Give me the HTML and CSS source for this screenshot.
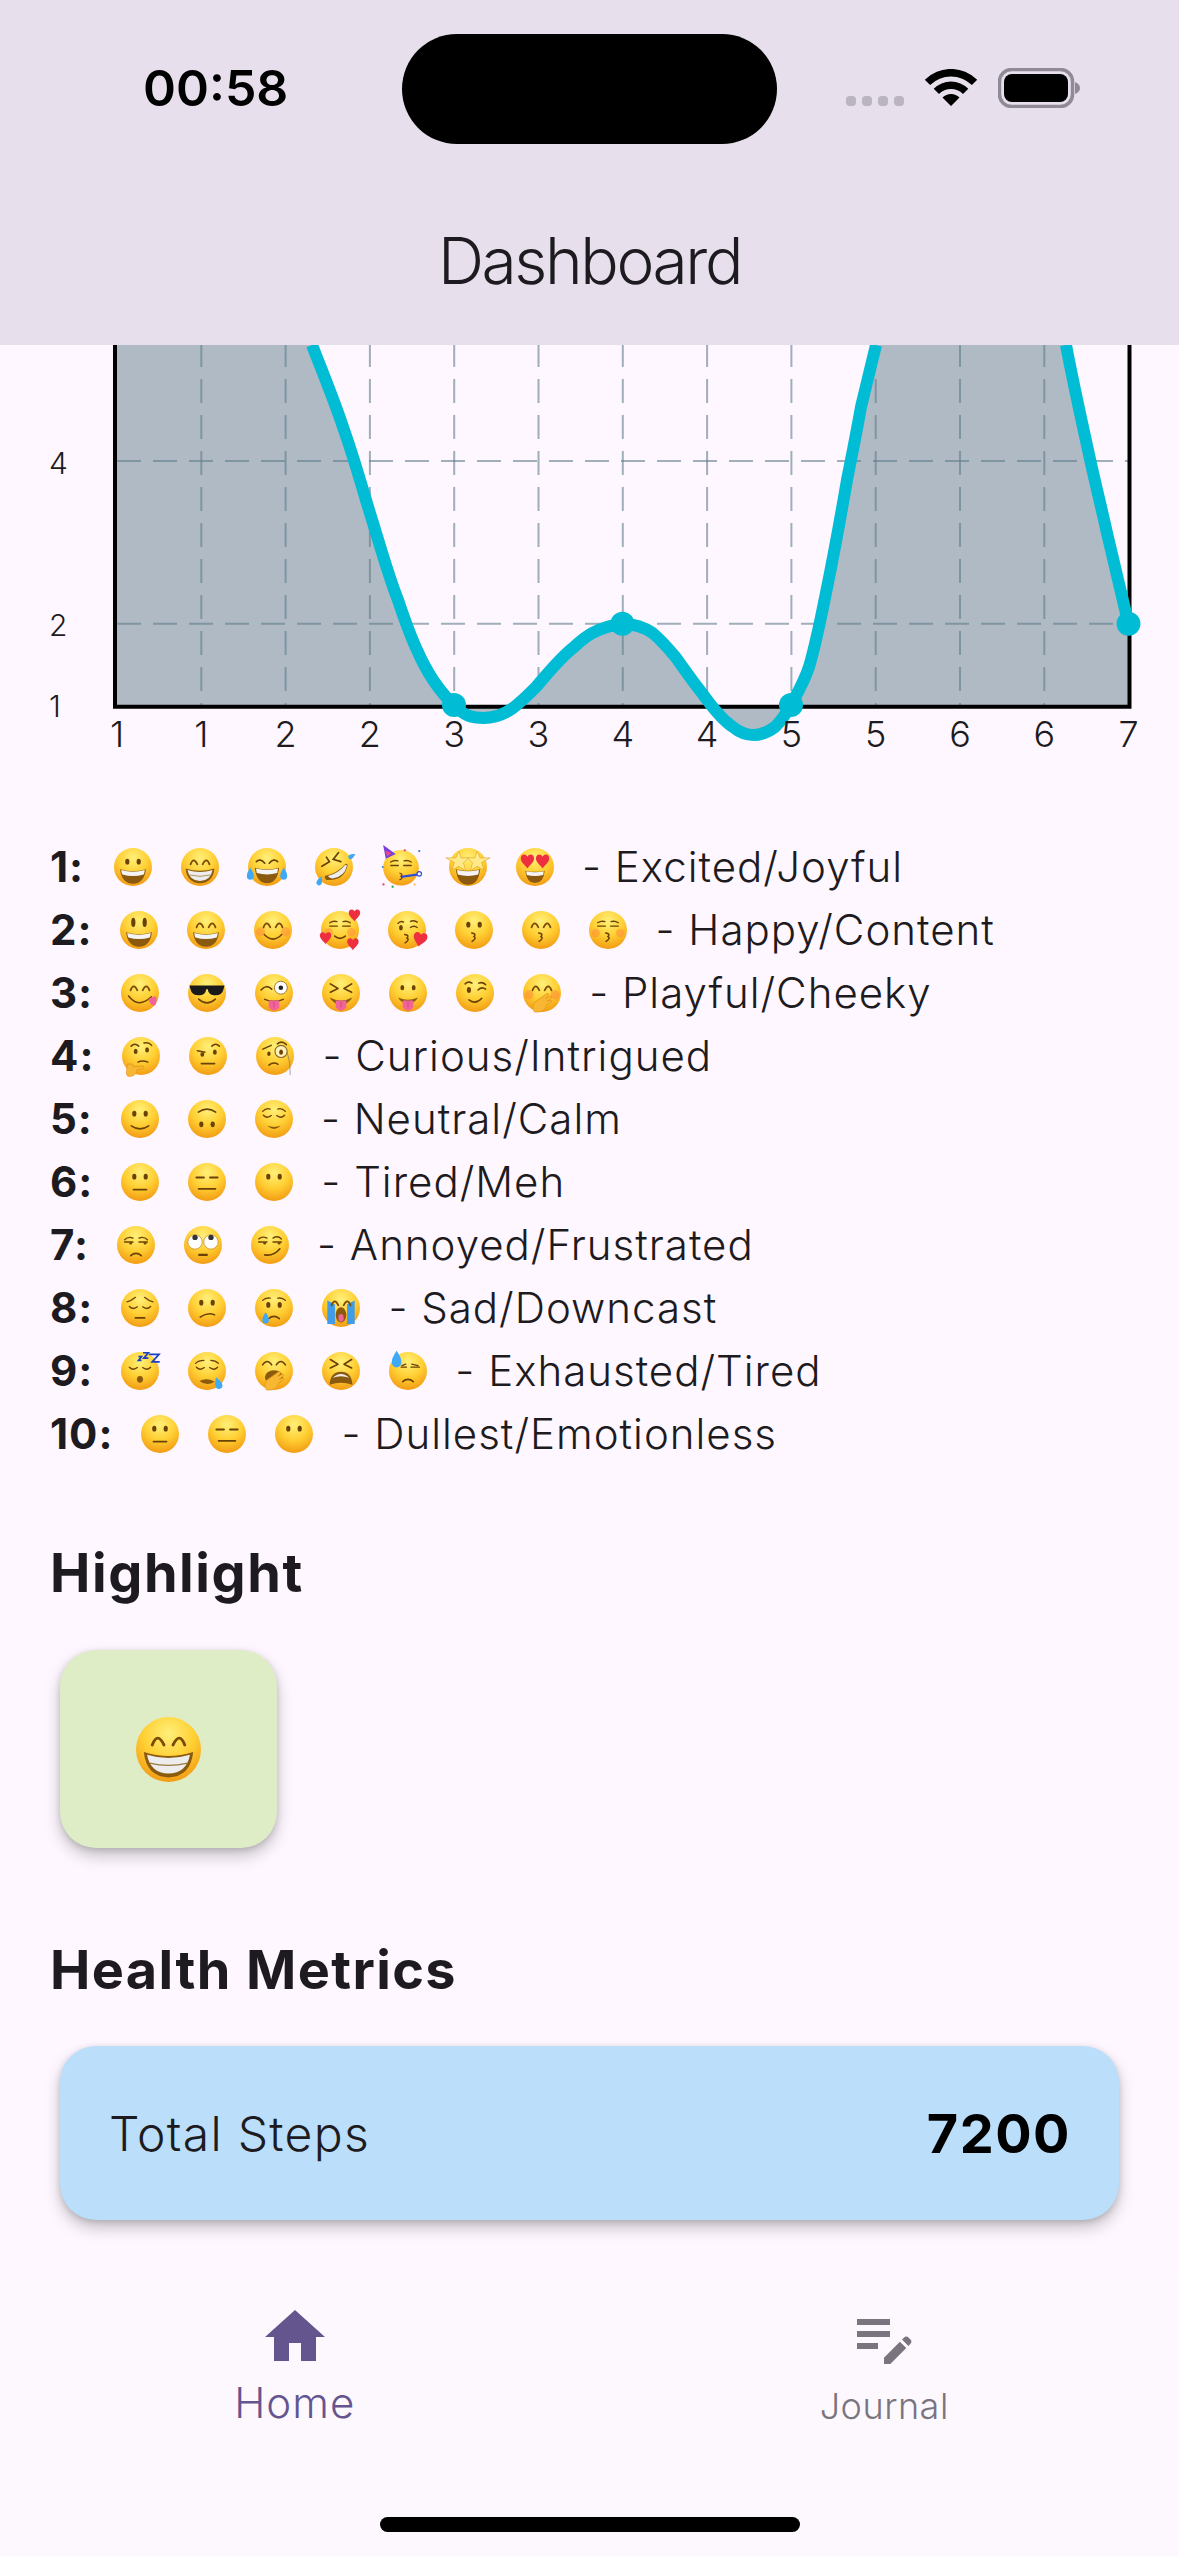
FILE: index.html
```html
<!DOCTYPE html>
<html lang="en">
<head>
<meta charset="utf-8">
<title>Dashboard</title>
<link rel="stylesheet" href="styles.css">
</head>
<body>
<svg class="defs" width="0" height="0" aria-hidden="true">
  <defs>
    <radialGradient id="fg" cx=".5" cy=".26" r=".8">
      <stop offset="0" stop-color="#FFF07A"/><stop offset=".5" stop-color="#FFCF33"/><stop offset="1" stop-color="#F0930E"/>
    </radialGradient>
    <g id="face"><circle cx="50" cy="50" r="50" fill="url(#fg)"/></g>
    <g id="eo" fill="#6B4206"><ellipse cx="35" cy="36" rx="5.5" ry="7.5"/><ellipse cx="65" cy="36" rx="5.5" ry="7.5"/></g>
    <g id="ea" fill="none" stroke="#7A4A06" stroke-width="4.5" stroke-linecap="round"><path d="M25 43Q33 22 43 43"/><path d="M57 43Q67 22 75 43"/></g>
    <g id="ec" fill="none" stroke="#6B4206" stroke-width="3.5" stroke-linecap="round"><path d="M22 40Q32 50 43 41"/><path d="M57 41Q68 50 78 40"/></g>
    <g id="ef" fill="none" stroke="#6B4206" stroke-width="3.5" stroke-linecap="round"><path d="M23 40H43"/><path d="M57 40H77"/><path d="M23 31Q32 25 42 28"/><path d="M58 28Q68 25 77 31"/></g>
    <g id="mo"><path d="M16 56Q50 66 84 56Q80 93 50 94Q20 93 16 56z" fill="#8B5A0E"/><path d="M19 58Q50 67 81 58Q80 66 78 70Q50 78 22 70Q20 66 19 58z" fill="#F4F4F4"/></g>
    <g id="mb"><path d="M12 54Q50 66 88 54Q84 92 50 93Q16 92 12 54z" fill="#8B5A0E"/><path d="M17 58Q50 68 83 58Q78 86 50 87Q22 86 17 58z" fill="#EDEDED"/><path d="M21 71Q50 78 79 71" stroke="#9C7A3C" stroke-width="2" fill="none"/></g>
    <g id="mj"><path d="M18 52Q50 60 82 52Q78 92 50 93Q22 92 18 52z" fill="#8B5A0E"/><path d="M21 54Q50 61 79 54L77 66Q50 73 23 66z" fill="#F4F4F4"/></g>
    <path id="ms" d="M30 67Q50 84 70 67" fill="none" stroke="#6B4206" stroke-width="4" stroke-linecap="round"/>
    <path id="mf" d="M33 70H67" fill="none" stroke="#6B4206" stroke-width="5" stroke-linecap="round"/>
    <path id="ms2" d="M36 78Q50 66 64 78" fill="none" stroke="#6B4206" stroke-width="4" stroke-linecap="round"/>
    <path id="mk" d="M44 58Q57 60 50 67Q58 71 45 80" fill="none" stroke="#6B4206" stroke-width="4" stroke-linecap="round"/>
    <path id="ht" d="M0 -9C-4 -16 -13 -13 -12 -5C-11 2 -4 6 0 12C4 6 11 2 12 -5C13 -13 4 -16 0 -9z" fill="#EE2F3F"/>
    <g id="tg"><path d="M36 70H64V88Q50 104 36 88z" fill="#F0649A"/><path d="M50 72V88" stroke="#C83E75" stroke-width="2"/></g>
    <path id="drop" d="M0 -20Q11 -4 10 5A10 10 0 0 1 -10 5Q-11 -4 0 -20z" fill="#3FA9F5"/>
    <path id="hand" d="M30 100Q20 80 34 72L62 52Q68 50 68 56L60 64L72 58Q78 58 74 64L64 72L74 68Q78 70 74 74L62 82Q58 98 42 100z" fill="#F7B733" stroke="#D98A12" stroke-width="1.5"/>

    <symbol id="e-grin" viewBox="0 0 100 100"><use href="#face"/><use href="#eo"/><use href="#mo"/></symbol>
    <symbol id="e-beam" viewBox="0 0 100 100"><use href="#face"/><use href="#ea"/><use href="#mb"/></symbol>
    <symbol id="e-joy" viewBox="0 0 100 100"><use href="#face"/><path d="M22 36Q32 26 44 40M78 36Q68 26 56 40" fill="none" stroke="#6B4206" stroke-width="4.5" stroke-linecap="round"/><use href="#mj"/><use href="#drop" transform="translate(6 70) scale(.9)"/><use href="#drop" transform="translate(94 70) scale(.9)"/></symbol>
    <symbol id="e-rofl" viewBox="0 0 100 100"><use href="#face"/><path d="M18 48L38 36L30 24M62 12L48 30L68 36" fill="none" stroke="#6B4206" stroke-width="4.5" stroke-linecap="round"/><path d="M30 84Q78 88 86 44Q84 40 80 42Q60 66 26 74Q24 80 30 84z" fill="#8B5A0E"/><path d="M84 46Q80 42 78 46Q62 66 34 74Q38 80 46 80Q78 76 84 46z" fill="#EDEDED"/><use href="#drop" transform="translate(96 22) rotate(60) scale(.6)"/><use href="#drop" transform="translate(12 88) rotate(20) scale(.7)"/></symbol>
    <symbol id="e-party" viewBox="0 0 100 100"><circle cx="50" cy="52" r="47" fill="url(#fg)"/><path d="M3 -8L36 16L10 28z" fill="#7A3FD6"/><path d="M8 6L24 14L14 22z" fill="#F2468E"/><use href="#ef" transform="translate(0 6)"/><path d="M46 66Q56 68 50 75Q58 78 46 84" fill="none" stroke="#6B4206" stroke-width="3.500"/><path d="M50 76L92 70" stroke="#2F4FD8" stroke-width="6"/><circle cx="98" cy="68" r="6" fill="none" stroke="#2F4FD8" stroke-width="3"/><circle cx="98" cy="8" r="3" fill="#2F7FE0"/><circle cx="60" cy="6" r="3" fill="#E83E6D"/><circle cx="4" cy="96" r="3" fill="#E83E6D"/><circle cx="28" cy="102" r="3" fill="#2FA84F"/><circle cx="86" cy="96" r="2.500" fill="#F5B32E"/><circle cx="2" cy="50" r="2.500" fill="#2F7FE0"/></symbol>
    <symbol id="e-star" viewBox="0 0 100 100"><use href="#face"/><use href="#mj" transform="translate(0 4)"/><g fill="#FFE98A" stroke="#D9A020" stroke-width="1.500"><path d="M26 8L32 26L52 26L38 39L44 60L26 48L8 58L14 38L-8 26L18 26z"/><path d="M74 8L82 26L108 26L86 38L92 58L74 48L56 60L62 39L48 26L68 26z"/></g></symbol>
    <symbol id="e-love" viewBox="0 0 100 100"><use href="#face"/><use href="#ht" transform="translate(30 36) scale(1.45)"/><use href="#ht" transform="translate(70 36) scale(1.45)"/><use href="#mj" transform="translate(10 18) scale(.8)"/></symbol>
    <symbol id="e-smiley" viewBox="0 0 100 100"><use href="#face"/><g fill="#6B4206"><ellipse cx="35" cy="30" rx="5.500" ry="12"/><ellipse cx="65" cy="30" rx="5.500" ry="12"/></g><use href="#mo"/></symbol>
    <symbol id="e-smile" viewBox="0 0 100 100"><use href="#face"/><use href="#ea"/><use href="#mo"/></symbol>
    <symbol id="e-blush" viewBox="0 0 100 100"><use href="#face"/><circle cx="17" cy="55" r="12" fill="#FF8A3C" opacity=".5"/><circle cx="83" cy="55" r="12" fill="#FF8A3C" opacity=".5"/><use href="#ea"/><path d="M27 62Q50 86 73 62" fill="none" stroke="#6B4206" stroke-width="4" stroke-linecap="round"/></symbol>
    <symbol id="e-hearts" viewBox="0 0 100 100"><use href="#face"/><circle cx="20" cy="56" r="11" fill="#FF8A3C" opacity=".5"/><circle cx="80" cy="56" r="11" fill="#FF8A3C" opacity=".5"/><use href="#ef"/><path d="M36 66Q50 78 64 66" fill="none" stroke="#6B4206" stroke-width="4" stroke-linecap="round"/><use href="#ht" transform="translate(88 12) scale(1.25)"/><use href="#ht" transform="translate(12 72) scale(1.25)"/><use href="#ht" transform="translate(84 88) scale(1.25)"/></symbol>
    <symbol id="e-kissheart" viewBox="0 0 100 100"><use href="#face"/><path d="M25 34Q33 24 42 30" fill="none" stroke="#6B4206" stroke-width="3.500"/><ellipse cx="34" cy="44" rx="5" ry="7" fill="#6B4206"/><path d="M58 28Q68 22 78 30M58 44Q68 36 78 44" fill="none" stroke="#6B4206" stroke-width="4"/><use href="#mk" transform="translate(0 4)"/><use href="#ht" transform="translate(84 76) scale(1.5) rotate(12)"/></symbol>
    <symbol id="e-kiss" viewBox="0 0 100 100"><use href="#face"/><use href="#eo"/><use href="#mk"/></symbol>
    <symbol id="e-kisssmile" viewBox="0 0 100 100"><use href="#face"/><use href="#ea"/><use href="#mk"/></symbol>
    <symbol id="e-kissclosed" viewBox="0 0 100 100"><use href="#face"/><circle cx="18" cy="58" r="11" fill="#FF8A3C" opacity=".5"/><circle cx="82" cy="58" r="11" fill="#FF8A3C" opacity=".5"/><use href="#ef"/><use href="#mk"/></symbol>
    <symbol id="e-yum" viewBox="0 0 100 100"><use href="#face"/><use href="#ea"/><path d="M20 58Q46 92 80 60" fill="none" stroke="#6B4206" stroke-width="4" stroke-linecap="round"/><path d="M72 66L90 58Q98 68 90 82Q78 86 72 66z" fill="#F0649A"/></symbol>
    <symbol id="e-cool" viewBox="0 0 100 100"><use href="#face"/><path d="M4 30H96L94 38Q90 58 68 56Q54 54 52 40H48Q46 54 32 56Q10 58 6 38z" fill="#1A1A1A"/><path d="M28 66Q50 86 72 66" fill="none" stroke="#6B4206" stroke-width="4" stroke-linecap="round"/></symbol>
    <symbol id="e-winkt" viewBox="0 0 100 100"><use href="#face"/><circle cx="68" cy="36" r="17" fill="#fff" stroke="#8B5A0E" stroke-width="2"/><circle cx="68" cy="36" r="6" fill="#222"/><path d="M16 42Q30 26 44 40" fill="none" stroke="#6B4206" stroke-width="4.500" stroke-linecap="round"/><path d="M24 66Q50 78 76 66" fill="none" stroke="#6B4206" stroke-width="4"/><use href="#tg"/></symbol>
    <symbol id="e-squint" viewBox="0 0 100 100"><use href="#face"/><path d="M22 26L42 38L22 48M78 26L58 38L78 48" fill="none" stroke="#6B4206" stroke-width="4.500" stroke-linecap="round" stroke-linejoin="round"/><path d="M20 62Q50 78 80 62Q70 80 50 80Q30 80 20 62z" fill="#8B5A0E"/><use href="#tg"/></symbol>
    <symbol id="e-tongue" viewBox="0 0 100 100"><use href="#face"/><ellipse cx="35" cy="36" rx="5" ry="7" fill="#6B4206"/><ellipse cx="65" cy="36" rx="5" ry="7" fill="#6B4206"/><path d="M24 62Q50 74 76 62Q68 78 50 78Q32 78 24 62z" fill="#8B5A0E"/><use href="#tg"/></symbol>
    <symbol id="e-wink" viewBox="0 0 100 100"><use href="#face"/><path d="M24 26Q32 18 42 24M60 24Q70 20 78 28M58 42Q68 32 78 40" fill="none" stroke="#6B4206" stroke-width="4" stroke-linecap="round"/><ellipse cx="34" cy="42" rx="5.500" ry="8" fill="#6B4206"/><path d="M34 68Q52 82 68 64" fill="none" stroke="#6B4206" stroke-width="4" stroke-linecap="round"/></symbol>
    <symbol id="e-hand" viewBox="0 0 100 100"><use href="#face"/><circle cx="16" cy="55" r="12" fill="#FF8A3C" opacity=".55"/><circle cx="84" cy="55" r="12" fill="#FF8A3C" opacity=".55"/><use href="#ea"/><use href="#hand"/></symbol>
    <symbol id="e-think" viewBox="0 0 100 100"><use href="#face"/><path d="M24 24Q34 14 44 24M58 16Q70 12 78 22" fill="none" stroke="#6B4206" stroke-width="4" stroke-linecap="round"/><ellipse cx="36" cy="38" rx="5" ry="7" fill="#6B4206"/><ellipse cx="66" cy="34" rx="5" ry="7" fill="#6B4206"/><path d="M42 66Q54 60 68 66" fill="none" stroke="#6B4206" stroke-width="4" stroke-linecap="round"/><path d="M14 72Q30 68 30 78L56 76Q60 80 54 84L40 86Q38 102 20 104Q10 104 12 90z" fill="#F7B733" stroke="#D98A12" stroke-width="1.500"/></symbol>
    <symbol id="e-brow" viewBox="0 0 100 100"><use href="#face"/><path d="M22 36L42 40M60 24Q70 14 80 24" fill="none" stroke="#6B4206" stroke-width="4" stroke-linecap="round"/><ellipse cx="35" cy="46" rx="5" ry="6" fill="#6B4206"/><ellipse cx="68" cy="40" rx="5" ry="7" fill="#6B4206"/><use href="#mf"/></symbol>
    <symbol id="e-mono" viewBox="0 0 100 100"><use href="#face"/><path d="M18 32L40 22M56 18Q68 8 80 20" fill="none" stroke="#6B4206" stroke-width="4" stroke-linecap="round"/><ellipse cx="34" cy="44" rx="4.500" ry="6" fill="#6B4206"/><circle cx="66" cy="38" r="16" fill="#FFF2B8" stroke="#8A6A2C" stroke-width="3"/><ellipse cx="66" cy="40" rx="5" ry="7" fill="#6B4206"/><path d="M34 74Q46 64 58 72" fill="none" stroke="#6B4206" stroke-width="4" stroke-linecap="round"/><path d="M82 40Q92 70 90 100" fill="none" stroke="#666" stroke-width="1.500"/></symbol>
    <symbol id="e-slight" viewBox="0 0 100 100"><use href="#face"/><use href="#eo"/><path d="M27 68Q50 84 73 68" fill="none" stroke="#6B4206" stroke-width="4" stroke-linecap="round"/></symbol>
    <symbol id="e-upside" viewBox="0 0 100 100"><use href="#face"/><g transform="rotate(180 50 50)"><use href="#eo"/><path d="M27 68Q50 84 73 68" fill="none" stroke="#6B4206" stroke-width="4" stroke-linecap="round"/></g></symbol>
    <symbol id="e-relief" viewBox="0 0 100 100"><use href="#face"/><path d="M20 30Q30 20 40 24M60 24Q70 20 80 30" fill="none" stroke="#6B4206" stroke-width="3.500" stroke-linecap="round"/><use href="#ec"/><path d="M32 68Q50 84 68 68Q50 74 32 68z" fill="#8B5A0E"/></symbol>
    <symbol id="e-neutral" viewBox="0 0 100 100"><use href="#face"/><use href="#eo"/><use href="#mf"/></symbol>
    <symbol id="e-expr" viewBox="0 0 100 100"><use href="#face"/><path d="M22 38H42M58 38H78" stroke="#6B4206" stroke-width="5" stroke-linecap="round"/><path d="M28 68H72" stroke="#6B4206" stroke-width="5" stroke-linecap="round"/></symbol>
    <symbol id="e-nomouth" viewBox="0 0 100 100"><use href="#face"/><use href="#eo"/></symbol>
    <symbol id="e-unamused" viewBox="0 0 100 100"><use href="#face"/><path d="M20 36Q30 26 42 32M58 32Q70 26 80 36M20 42H42M58 42H80" fill="none" stroke="#6B4206" stroke-width="3.500" stroke-linecap="round"/><ellipse cx="36" cy="46" rx="4" ry="3" fill="#6B4206"/><ellipse cx="74" cy="46" rx="4" ry="3" fill="#6B4206"/><use href="#ms2"/></symbol>
    <symbol id="e-roll" viewBox="0 0 100 100"><use href="#face"/><circle cx="29" cy="42" r="19" fill="#fff" stroke="#C98B20" stroke-width="2"/><circle cx="71" cy="42" r="19" fill="#fff" stroke="#C98B20" stroke-width="2"/><circle cx="29" cy="30" r="7" fill="#333"/><circle cx="71" cy="30" r="7" fill="#333"/><path d="M40 76H60" stroke="#6B4206" stroke-width="6" stroke-linecap="round"/></symbol>
    <symbol id="e-smirk" viewBox="0 0 100 100"><use href="#face"/><path d="M20 34Q30 26 42 32M58 32Q70 24 80 34M20 42H42M58 42H80" fill="none" stroke="#6B4206" stroke-width="3.500" stroke-linecap="round"/><ellipse cx="36" cy="46" rx="4" ry="3" fill="#6B4206"/><ellipse cx="74" cy="46" rx="4" ry="3" fill="#6B4206"/><path d="M36 76Q60 80 76 60" fill="none" stroke="#6B4206" stroke-width="4.500" stroke-linecap="round"/></symbol>
    <symbol id="e-pensive" viewBox="0 0 100 100"><use href="#face"/><path d="M16 34Q26 32 38 22M62 22Q74 32 84 34" fill="none" stroke="#6B4206" stroke-width="3.500" stroke-linecap="round"/><path d="M22 46Q32 56 43 47M57 47Q68 56 78 46" fill="none" stroke="#6B4206" stroke-width="3.500" stroke-linecap="round"/><path d="M38 76H62" stroke="#6B4206" stroke-width="5" stroke-linecap="round"/></symbol>
    <symbol id="e-confused" viewBox="0 0 100 100"><use href="#face"/><use href="#eo"/><path d="M32 74Q52 60 70 68" fill="none" stroke="#6B4206" stroke-width="4" stroke-linecap="round"/></symbol>
    <symbol id="e-cry" viewBox="0 0 100 100"><use href="#face"/><path d="M20 30Q28 22 40 24M60 24Q72 22 80 30" fill="none" stroke="#6B4206" stroke-width="3.500" stroke-linecap="round"/><use href="#eo" transform="translate(0 6)"/><use href="#ms2"/><use href="#drop" transform="translate(28 78) scale(.85)"/></symbol>
    <symbol id="e-sob" viewBox="0 0 100 100"><use href="#face"/><path d="M14 30V92H34V40zM86 30V92H66V40z" fill="#3F9CEB"/><use href="#ea"/><ellipse cx="50" cy="68" rx="14" ry="20" fill="#8B5A0E"/><ellipse cx="50" cy="76" rx="7" ry="10" fill="#F0649A"/></symbol>
    <symbol id="e-sleep" viewBox="0 0 100 100"><use href="#face"/><use href="#ec"/><ellipse cx="50" cy="72" rx="8" ry="9" fill="#8B5A0E"/><path d="M74 6H100L82 26H102M58 2H72L60 16H72M46 12H54L46 22H54" fill="none" stroke="#1B3FC4" stroke-width="4.500"/></symbol>
    <symbol id="e-sleepy" viewBox="0 0 100 100"><use href="#face"/><path d="M20 30Q28 22 42 22M60 22Q72 22 80 30" fill="none" stroke="#6B4206" stroke-width="3.500" stroke-linecap="round"/><use href="#ec"/><path d="M30 76Q50 66 70 78Q50 92 30 76z" fill="#8B5A0E"/><use href="#drop" transform="translate(80 84) rotate(-20) scale(.9)"/></symbol>
    <symbol id="e-yawn" viewBox="0 0 100 100"><use href="#face"/><path d="M20 34Q32 16 44 34M56 34Q68 16 80 34" fill="none" stroke="#6B4206" stroke-width="4" stroke-linecap="round"/><ellipse cx="50" cy="66" rx="24" ry="18" fill="#8B5A0E"/><use href="#hand"/></symbol>
    <symbol id="e-tired" viewBox="0 0 100 100"><use href="#face"/><path d="M22 20L42 32L22 42M78 20L58 32L78 42" fill="none" stroke="#6B4206" stroke-width="4.500" stroke-linecap="round" stroke-linejoin="round"/><path d="M20 86Q22 52 50 52Q78 52 80 86Q50 76 20 86z" fill="#8B5A0E"/><path d="M28 68Q50 48 72 68Q50 60 28 68z" fill="#EDEDED"/></symbol>
    <symbol id="e-sweat" viewBox="0 0 100 100"><use href="#face"/><path d="M32 40H46M58 40H80M34 36L44 32M60 32L76 36" fill="none" stroke="#6B4206" stroke-width="3.500" stroke-linecap="round"/><use href="#ms2"/><use href="#drop" transform="translate(20 22) scale(1.25)"/></symbol>
  </defs>
</svg>

<header class="appbar">
  <div class="status">
    <div class="time">00:58</div>
    <div class="island"></div>
    <div class="sys">
      <div class="cell"><i></i><i></i><i></i><i></i></div>
      <svg class="wifi" viewBox="-2 0 54 37" aria-hidden="true"><path d="M-1.200 10.800A37 37 0 0 1 51.200 10.800L45.900 16.100A29.500 29.500 0 0 0 4.100 16.100zM7.700 19.700A24.500 24.500 0 0 1 42.300 19.700L37 25A17 17 0 0 0 13 25zM16.500 28.500A12 12 0 0 1 33.500 28.500L25 37z" fill="#000"/></svg>
      <svg class="batt" viewBox="0 0 82 40" aria-hidden="true"><rect x="1.500" y="1.500" width="73" height="37" rx="12" fill="none" stroke="#8F8A96" stroke-width="3.500"/><rect x="6" y="6" width="64" height="28" rx="8" fill="#000"/><path d="M77 14Q82 16 82 20Q82 24 77 26z" fill="#8F8A96"/></svg>
    </div>
  </div>
  <h1 class="title">Dashboard</h1>
</header>

<main class="scroll">
  <svg class="chart" viewBox="0 345 1179 425" role="img" aria-label="Mood chart">
    <path class="area" d="M115 345H312C325 378 336 405 344 430C354 458 361 484 369 510C380 545 388 575 398 600C404 618 410 635 417 650C428 675 440 692 454 705C464 716 472 718 484 718C494 718 503 715 513 708C521 702 529 694 536 687C548 673 560 658 574 647C584 638 596 627 622.400 623.700C636 624 644 627 652.600 633C661 640 668 648 675.500 657C685 670 693 682 702 693C712 707 722 720 733 727C740 733 747 735 754 735C761 735 768 732 775 727C782 720 786 714 791 705C798 692 804 682 809 667C817 640 822 612 828 583C835 548 841 515 847 480C852 455 857 430 861 407L876 345H1066C1073 382 1081 418 1088 450C1094 478 1101 506 1107 533C1114 563 1121 593 1128.500 624V705.200H115z"/>
    <g class="grid">
      <path d="M117 461H1129M117 623.700H1129"/>
      <path d="M201.300 343V705M285.600 343V705M369.900 343V705M454.200 343V705M538.500 343V705M622.800 343V705M707.100 343V705M791.400 343V705M875.700 343V705M960 343V705M1044.300 343V705"/>
    </g>
    <path class="axis" d="M115 345V706.700H1129.500V345"/>
    <path class="line" d="M312 345C325 378 336 405 344 430C354 458 361 484 369 510C380 545 388 575 398 600C404 618 410 635 417 650C428 675 440 692 454 705C464 716 472 718 484 718C494 718 503 715 513 708C521 702 529 694 536 687C548 673 560 658 574 647C584 638 596 627 622.400 623.700C636 624 644 627 652.600 633C661 640 668 648 675.500 657C685 670 693 682 702 693C712 707 722 720 733 727C740 733 747 735 754 735C761 735 768 732 775 727C782 720 786 714 791 705C798 692 804 682 809 667C817 640 822 612 828 583C835 548 841 515 847 480C852 455 857 430 861 407L876 345M1066 345C1073 382 1081 418 1088 450C1094 478 1101 506 1107 533C1114 563 1121 593 1128.500 624"/>
    <g class="dots"><circle cx="454" cy="705" r="12"/><circle cx="622.400" cy="623.700" r="12"/><circle cx="791" cy="705" r="12"/><circle cx="1128.500" cy="623.700" r="12"/></g>
    <g class="ylab"><text x="49" y="474">4</text><text x="49" y="636">2</text><text x="49" y="717">1</text></g>
    <g class="xlab"><text x="117" y="747">1</text><text x="201.300" y="747">1</text><text x="285.600" y="747">2</text><text x="369.900" y="747">2</text><text x="454.200" y="747">3</text><text x="538.500" y="747">3</text><text x="622.800" y="747">4</text><text x="707.100" y="747">4</text><text x="791.400" y="747">5</text><text x="875.700" y="747">5</text><text x="960" y="747">6</text><text x="1044.300" y="747">6</text><text x="1128.500" y="747">7</text></g>
  </svg>

  <ul class="legend">
    <li class="row"><b>1:</b><span class="em"><svg role="img" aria-label="😀"><use href="#e-grin"/></svg><svg role="img" aria-label="😁"><use href="#e-beam"/></svg><svg role="img" aria-label="😂"><use href="#e-joy"/></svg><svg role="img" aria-label="🤣"><use href="#e-rofl"/></svg><svg role="img" aria-label="🥳"><use href="#e-party"/></svg><svg role="img" aria-label="🤩"><use href="#e-star"/></svg><svg role="img" aria-label="😍"><use href="#e-love"/></svg></span><span>- Excited/Joyful</span></li>
    <li class="row"><b>2:</b><span class="em"><svg role="img" aria-label="😃"><use href="#e-smiley"/></svg><svg role="img" aria-label="😄"><use href="#e-smile"/></svg><svg role="img" aria-label="😊"><use href="#e-blush"/></svg><svg role="img" aria-label="🥰"><use href="#e-hearts"/></svg><svg role="img" aria-label="😘"><use href="#e-kissheart"/></svg><svg role="img" aria-label="😗"><use href="#e-kiss"/></svg><svg role="img" aria-label="😙"><use href="#e-kisssmile"/></svg><svg role="img" aria-label="😚"><use href="#e-kissclosed"/></svg></span><span>- Happy/Content</span></li>
    <li class="row"><b>3:</b><span class="em"><svg role="img" aria-label="😋"><use href="#e-yum"/></svg><svg role="img" aria-label="😎"><use href="#e-cool"/></svg><svg role="img" aria-label="😜"><use href="#e-winkt"/></svg><svg role="img" aria-label="😝"><use href="#e-squint"/></svg><svg role="img" aria-label="😛"><use href="#e-tongue"/></svg><svg role="img" aria-label="😉"><use href="#e-wink"/></svg><svg role="img" aria-label="🤭"><use href="#e-hand"/></svg></span><span>- Playful/Cheeky</span></li>
    <li class="row"><b>4:</b><span class="em"><svg role="img" aria-label="🤔"><use href="#e-think"/></svg><svg role="img" aria-label="🤨"><use href="#e-brow"/></svg><svg role="img" aria-label="🧐"><use href="#e-mono"/></svg></span><span>- Curious/Intrigued</span></li>
    <li class="row"><b>5:</b><span class="em"><svg role="img" aria-label="🙂"><use href="#e-slight"/></svg><svg role="img" aria-label="🙃"><use href="#e-upside"/></svg><svg role="img" aria-label="😌"><use href="#e-relief"/></svg></span><span>- Neutral/Calm</span></li>
    <li class="row"><b>6:</b><span class="em"><svg role="img" aria-label="😐"><use href="#e-neutral"/></svg><svg role="img" aria-label="😑"><use href="#e-expr"/></svg><svg role="img" aria-label="😶"><use href="#e-nomouth"/></svg></span><span>- Tired/Meh</span></li>
    <li class="row"><b>7:</b><span class="em"><svg role="img" aria-label="😒"><use href="#e-unamused"/></svg><svg role="img" aria-label="🙄"><use href="#e-roll"/></svg><svg role="img" aria-label="😏"><use href="#e-smirk"/></svg></span><span>- Annoyed/Frustrated</span></li>
    <li class="row"><b>8:</b><span class="em"><svg role="img" aria-label="😔"><use href="#e-pensive"/></svg><svg role="img" aria-label="😕"><use href="#e-confused"/></svg><svg role="img" aria-label="😢"><use href="#e-cry"/></svg><svg role="img" aria-label="😭"><use href="#e-sob"/></svg></span><span>- Sad/Downcast</span></li>
    <li class="row"><b>9:</b><span class="em"><svg role="img" aria-label="😴"><use href="#e-sleep"/></svg><svg role="img" aria-label="😪"><use href="#e-sleepy"/></svg><svg role="img" aria-label="🥱"><use href="#e-yawn"/></svg><svg role="img" aria-label="😫"><use href="#e-tired"/></svg><svg role="img" aria-label="😓"><use href="#e-sweat"/></svg></span><span>- Exhausted/Tired</span></li>
    <li class="row"><b>10:</b><span class="em"><svg role="img" aria-label="😐"><use href="#e-neutral"/></svg><svg role="img" aria-label="😑"><use href="#e-expr"/></svg><svg role="img" aria-label="😶"><use href="#e-nomouth"/></svg></span><span>- Dullest/Emotionless</span></li>
  </ul>

  <h2 class="section first">Highlight</h2>
  <div class="tile"><svg class="tile-emoji" role="img" aria-label="😁"><use href="#e-beam"/></svg></div>

  <h2 class="section second">Health Metrics</h2>
  <div class="metric"><span>Total Steps</span><strong>7200</strong></div>
</main>

<nav class="nav">
  <div class="tabs">
    <div class="tab active">
      <svg class="ico" viewBox="0 0 24 24" aria-hidden="true"><path d="M10 20v-6h4v6h5v-8h3L12 3 2 12h3v8z"/></svg>
      <span>Home</span>
    </div>
    <div class="tab">
      <svg class="ico" viewBox="0 0 24 24" aria-hidden="true"><path d="M3 10h11v2H3v-2zm0-2h11V6H3v2zm0 8h7v-2H3v2zm15.010-3.130.71-.71c.39-.39 1.020-.39 1.410 0l.71.71c.39.39.39 1.020 0 1.410l-.71.71-2.120-2.120zm-.71.71-5.300 5.300V21h2.120l5.300-5.300-2.120-2.120z"/></svg>
      <span>Journal</span>
    </div>
  </div>
  <div class="homebar"></div>
</nav>
</body>
</html>
```
FILE: styles.css
```css
* { box-sizing: border-box; }
html, body { margin: 0; padding: 0; }
body {
  width: 1179px;
  height: 2556px;
  display: flex;
  flex-direction: column;
  overflow: hidden;
  background: #FEF7FF;
  color: #1D1B20;
  font-family: Inter, "Liberation Sans", sans-serif;
}
.defs { position: absolute; }

.appbar { height: 345px; background: #E7E0EC; padding-top: 34px; flex: none; }
.status { display: grid; grid-template-columns: 402px 375px 402px; height: 110px; }
.time { font-size: 50px; font-weight: 600; color: #000; line-height: 62px; margin-top: 23px; padding-left: 143px; }
.island { background: #000; border-radius: 55px; }
.sys { display: flex; align-items: flex-start; padding-left: 69px; }
.cell { display: flex; gap: 6px; margin-top: 62px; }
.cell i { width: 10px; height: 10px; border-radius: 4px; background: #B9B4BF; }
.wifi { width: 54px; height: 37px; margin: 35px 0 0 20px; }
.batt { width: 82px; height: 40px; margin: 34px 0 0 20px; }
.title { margin: 77px 0 0; text-align: center; font-size: 64px; font-weight: 350; line-height: 80px; letter-spacing: -2.400px; }

.scroll { flex: 1; min-height: 0; overflow: hidden; }
.chart { display: block; width: 1179px; height: 425px; }
.area { fill: #607D8B; fill-opacity: .5; }
.grid path { fill: none; stroke: #607D8B; stroke-opacity: .6; stroke-width: 2; stroke-dasharray: 24 12; }
.axis { fill: none; stroke: #000; stroke-width: 4; }
.line { fill: none; stroke: #00BCD4; stroke-width: 12; stroke-linejoin: round; }
.dots { fill: #00BCD4; }
.ylab text { font-size: 30px; font-weight: 350; text-anchor: start; fill: #1D1B20; }
.xlab text { font-size: 36px; font-weight: 350; text-anchor: middle; fill: #1D1B20; }

.legend { list-style: none; margin: 65px 0 0; padding: 0 0 0 50px; }
.row { display: flex; align-items: center; height: 63px; font-size: 42px; font-weight: 350; letter-spacing: 1px; }
.row b { font-weight: 700; letter-spacing: 1px; min-width: 36px; }
.em { display: flex; gap: 29px; margin: 0 28px 0 28px; }
.em svg { width: 38px; height: 38px; overflow: visible; }
symbol { overflow: visible; }

.section { margin: 0; padding-left: 50px; font-size: 54px; font-weight: 700; line-height: 66px; letter-spacing: 1.600px; }
.first { margin-top: 75px; }
.second { margin-top: 89px; letter-spacing: 1.400px; }
.tile {
  width: 217px; height: 198px; margin: 44px 0 0 60px;
  display: flex; align-items: center; justify-content: center;
  background: #DFEDC7; border-radius: 36px;
  box-shadow: 0 8px 16px rgba(0,0,0,.22), 0 2px 6px rgba(0,0,0,.14);
}
.tile-emoji { width: 65px; height: 65px; }
.metric {
  height: 174px; margin: 43px 60px 0;
  padding: 0 48px 0 49px;
  display: flex; align-items: center; justify-content: space-between;
  background: #BBDEFB; border-radius: 36px;
  box-shadow: 0 8px 16px rgba(0,0,0,.22), 0 2px 6px rgba(0,0,0,.14);
  font-size: 48px; font-weight: 350; letter-spacing: 1.300px;
}
.metric strong { font-size: 54px; font-weight: 700; color: #000; letter-spacing: 1.500px; }

.nav { height: 277px; flex: none; background: #FDF8FE; display: flex; flex-direction: column; align-items: stretch; }
.tabs { display: grid; grid-template-columns: 1fr 1fr; padding-top: 22px; }
.tab { display: flex; flex-direction: column; align-items: center; color: #79747E; font-size: 36px; font-weight: 350; letter-spacing: .5px; line-height: 50px; }
.ico { width: 72px; height: 72px; fill: currentColor; margin-bottom: 8px; }
.tab.active { color: #65558F; font-size: 42px; letter-spacing: 1px; }
.tab.active .ico { margin-bottom: 5px; }
.homebar { width: 420px; height: 15px; border-radius: 8px; background: #000; margin: auto auto 24px; }
```
